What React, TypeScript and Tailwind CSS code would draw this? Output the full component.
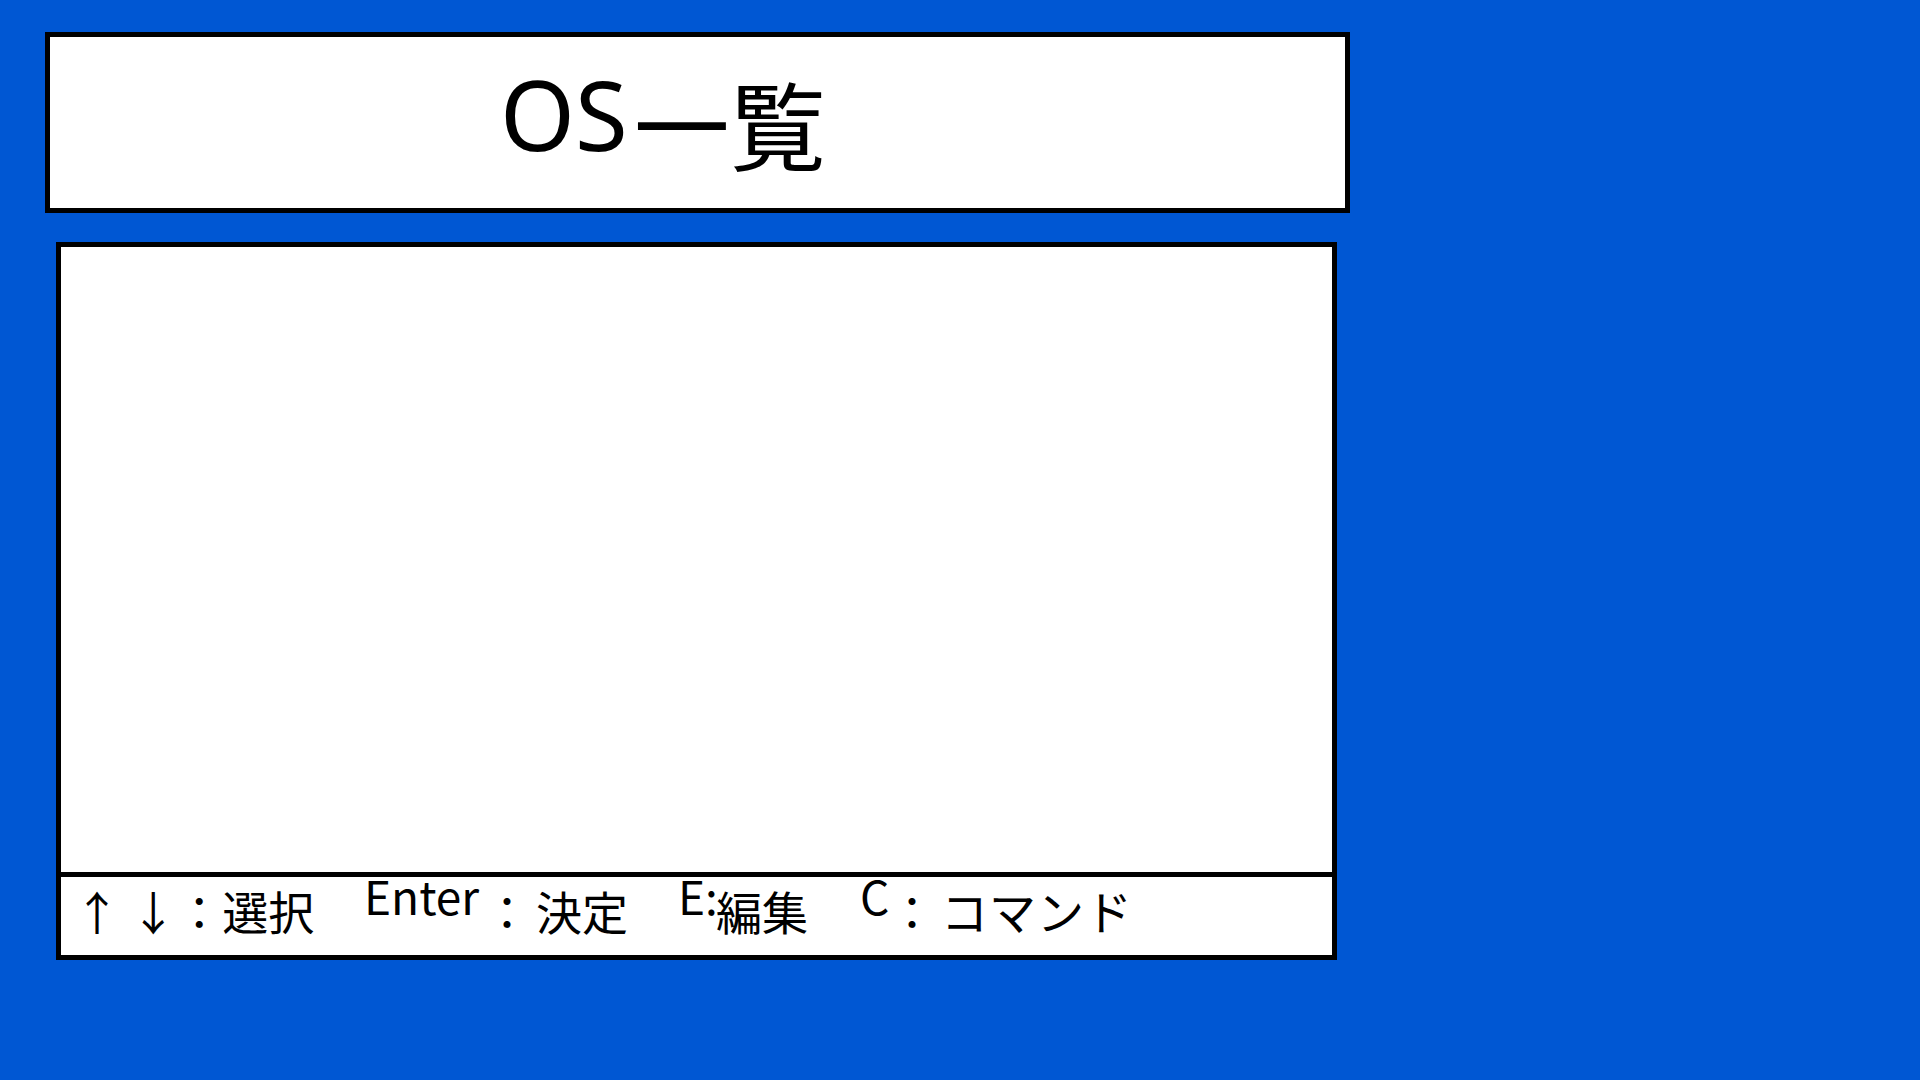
const jp = "font-['Noto_Sans_CJK_JP',sans-serif]";

export default function App() {
	return (
		<div className={`min-h-screen w-full bg-[#0057d3] ${jp} text-black`}>
			<div className="flex flex-col pt-[32px] pl-[45px]">
				{/* title */}
				<div className="h-[181px] w-[1305px] border-[5px] border-black bg-white pt-[29px] pl-[450px]">
					<h1 className="flex items-start text-[96px] leading-none">
						<span className="font-['Noto_Sans',sans-serif]">OS</span>
						<span className="mt-[8px] ml-[6px]">一覧</span>
					</h1>
				</div>

				{/* list */}
				<div className="mt-[29px] ml-[11px] flex h-[718px] w-[1281px] flex-col border-[5px] border-black bg-white">
					<div className="flex-1 border-b-[5px] border-black" />

					<div className="flex h-[78px] items-start pl-[13px] text-[46px] leading-none">
						<span className="mt-[10px] w-[290px] shrink-0 whitespace-pre">↑ ↓：選択</span>
						<span className="mt-[-5px] w-[120px] shrink-0">Enter</span>
						<span className="mt-[10px] w-[52px] shrink-0">：</span>
						<span className="mt-[10px] w-[142px] shrink-0">決定</span>
						<span className="mt-[-5px] w-[38px] shrink-0">E:</span>
						<span className="mt-[10px] w-[144px] shrink-0">編集</span>
						<span className="mt-[-5px] w-[29px] shrink-0">C</span>
						<span className="mt-[10px] w-[52px] shrink-0">：</span>
						<span className="mt-[9px] shrink-0 text-[47px] tracking-[1px]">コマンド</span>
					</div>
				</div>
			</div>
		</div>
	);
}
